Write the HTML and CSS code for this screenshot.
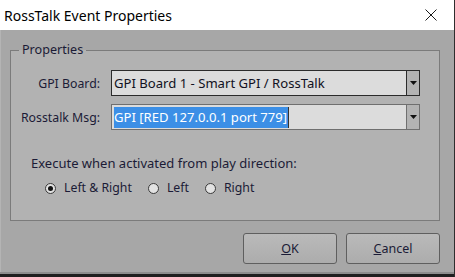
FILE: index.html
```html
<!DOCTYPE html>
<html>
<head>
<meta charset="utf-8">
<title>RossTalk Event Properties</title>
<link rel="stylesheet" href="styles.css">
</head>
<body>
<div class="window">
    <div class="titlebar">
        <span class="title">RossTalk Event Properties</span>
        <svg class="close" width="12" height="12" viewBox="0 0 12 12"><path d="M0.5 0.5 L11.5 11.5 M11.5 0.5 L0.5 11.5"/></svg>
    </div>
    <div class="dialog">
        <fieldset class="group">
            <legend>Properties</legend>
            <div class="fields">
                <label>GPI Board:</label>
                <div class="combo combo-focus">
                    <span class="combo-text">GPI Board 1 - Smart GPI / RossTalk</span>
                    <span class="combo-btn"><svg width="7" height="4" viewBox="0 0 7 4"><polygon points="0,0 7,0 3.5,4"/></svg></span>
                </div>
                <label>Rosstalk Msg:</label>
                <div class="combo">
                    <span class="combo-text"><span class="selected">GPI [RED 127.0.0.1 port 779]</span></span>
                    <span class="combo-btn"><svg width="7" height="4" viewBox="0 0 7 4"><polygon points="0,0 7,0 3.5,4"/></svg></span>
                </div>
            </div>
            <div class="execute">Execute when activated from play direction:</div>
            <div class="radios">
                <span class="radio checked"><i></i>Left &amp; Right</span>
                <span class="radio"><i></i>Left</span>
                <span class="radio"><i></i>Right</span>
            </div>
        </fieldset>
        <div class="buttons">
            <button><u>O</u>K</button>
            <button><u>C</u>ancel</button>
        </div>
    </div>
    <div class="bottom"></div>
</div>
</body>
</html>
```

FILE: styles.css
```css
body {
    margin: 0;
    width: 455px;
    height: 277px;
    overflow: hidden;
    font-family: "Noto Sans", "Open Sans", sans-serif;
}
.window {
    display: flex;
    flex-direction: column;
    height: 277px;
    border-right: 1px solid #2e2e2e;
}
.titlebar {
    height: 30px;
    flex: none;
    background: #ffffff;
    display: flex;
    align-items: center;
    justify-content: space-between;
    padding: 0 17px 0 4px;
}
.title {
    font-size: 14px;
    color: #000000;
}
.close path {
    stroke: #1a1a1a;
    stroke-width: 1;
    fill: none;
}
.dialog {
    flex: 1;
    background: #a7a7a7;
    border-left: 1px solid #b4b4b4;
    padding: 13px 14px 0 9px;
    font-size: 12px;
    color: #1b1b36;
}
.group {
    margin: 0;
    padding: 0;
    border: 1px solid #7b7b7b;
    background: #b2b2b2;
}
.group legend {
    margin-left: 8px;
    padding: 0 3px;
    line-height: 14px;
    font-size: 12.6px;
}
.fields {
    display: grid;
    grid-template-columns: 89px 309px;
    grid-auto-rows: 26px;
    column-gap: 11px;
    row-gap: 8px;
    margin-top: 13px;
    align-items: center;
}
.fields label {
    text-align: right;
    font-size: 12.3px;
}
.combo {
    display: flex;
    height: 26px;
    box-sizing: border-box;
    border: 1px solid #6f6f6f;
    background: #dcdcdc;
}
.combo-focus {
    border-color: #2b2b2b;
}
.combo-text {
    flex: 1;
    display: flex;
    align-items: center;
    padding-left: 2px;
    font-size: 13.1px;
    color: #111122;
}
.selected {
    background: #3c8fe6;
    color: #ffffff;
    line-height: 21px;
    padding-right: 1px;
    border-right: 1px solid #333333;
}
.combo-btn {
    width: 12px;
    border-left: 1px solid #6f6f6f;
    background: #b3b3b3;
    display: flex;
    align-items: center;
    justify-content: center;
}
.combo-focus .combo-btn {
    border-left-color: #2b2b2b;
}
.combo-btn polygon {
    fill: #111111;
}
.execute {
    margin: 25px 0 0 20px;
    line-height: 16px;
    font-size: 13px;
}
.radios {
    display: flex;
    gap: 16px;
    margin: 9px 0 24px 34px;
    line-height: 16px;
    font-size: 12.3px;
}
.radio {
    display: flex;
    align-items: center;
    gap: 8px;
}
.radio i {
    width: 9px;
    height: 9px;
    border: 1px solid #3a3a3a;
    border-radius: 50%;
    background: #e2e2e2;
    display: flex;
    align-items: center;
    justify-content: center;
}
.radio.checked i::after {
    content: "";
    width: 5px;
    height: 5px;
    border-radius: 50%;
    background: #111111;
}
.buttons {
    display: flex;
    justify-content: flex-end;
    gap: 9px;
    margin-top: 12px;
}
.buttons button {
    width: 94px;
    height: 31px;
    border: 1px solid #5f5f5f;
    border-radius: 3px;
    background: linear-gradient(#bababa, #acacac);
    font-family: "Noto Sans", "Open Sans", sans-serif;
    font-size: 12.5px;
    color: #1b1b36;
    padding: 0;
}
.bottom {
    height: 3px;
    flex: none;
    background: #1f1f1f;
    border-top: 2px solid #8d8d8d;
}
```
